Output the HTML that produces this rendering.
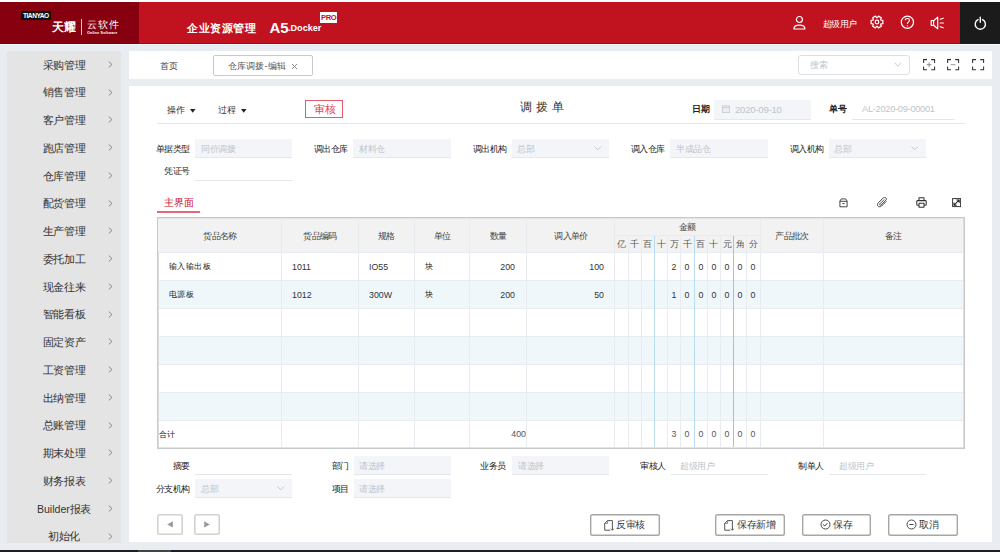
<!DOCTYPE html><html><head><meta charset="utf-8"><style>
html,body{margin:0;padding:0;}
body{width:1000px;height:552px;overflow:hidden;position:relative;background:#e9ecf1;font-family:"Liberation Sans", sans-serif;}
.b{position:absolute;box-sizing:border-box;}
.t{position:absolute;white-space:nowrap;line-height:1;}
.c{position:absolute;white-space:nowrap;line-height:1;width:300px;text-align:center;}
.r{position:absolute;white-space:nowrap;line-height:1;width:300px;text-align:right;}
</style></head><body>
<div class="b" style="left:0px;top:0px;width:1000px;height:2px;background:#fcffff"></div>
<div class="b" style="left:0px;top:2px;width:1000px;height:41.7px;background:#c1121f"></div>
<div class="b" style="left:0px;top:42.6px;width:1000px;height:1.1px;background:#b8000f"></div>
<div class="b" style="left:0px;top:2px;width:139px;height:41.7px;background:#87000f"></div>
<div class="b" style="left:0px;top:42.6px;width:139px;height:1.1px;background:#7e000a"></div>
<div class="b" style="left:960.4px;top:2px;width:39.6px;height:41.7px;background:#1b1b1b"></div>
<div class="b" style="left:0px;top:43.7px;width:1000px;height:1.5px;background:#f4fafc"></div>
<div class="b" style="left:21px;top:11px;width:30.3px;height:9px;background:#111"></div>
<div class="t" style="left:22.50px;top:12.20px;font-size:7px;color:#fff;font-weight:bold;transform:scale(0.9429);transform-origin:0 0;letter-spacing:-0.530px;">TIANYAO</div>
<div class="t" style="left:52.20px;top:20.50px;font-size:12px;color:#fff;font-weight:bold;">天耀</div>
<div class="b" style="left:81px;top:19.3px;width:1px;height:15.4px;background:#e8c8cc"></div>
<div class="t" style="left:86.50px;top:20.00px;font-size:11px;color:#fff;font-weight:normal;transform:scale(0.9182);transform-origin:0 0;letter-spacing:0.708px;">云软件</div>
<div class="t" style="left:86.50px;top:31.00px;font-size:4px;color:#fff;font-weight:bold;transform:scale(0.9250);transform-origin:0 0;letter-spacing:0.162px;">Online Software</div>
<div class="t" style="left:187.30px;top:22.90px;font-size:11px;color:#fff;font-weight:bold;transform:scale(0.9636);transform-origin:0 0;letter-spacing:0.986px;">企业资源管理</div>
<div class="t" style="left:269.50px;top:19.60px;font-size:15px;color:#fff;font-weight:bold;">A5</div>
<div class="t" style="left:288.20px;top:24.30px;font-size:10px;color:#fff;font-weight:bold;transform:scale(0.9100);transform-origin:0 0;">.Docker</div>
<div class="b" style="left:320px;top:12.4px;width:16.8px;height:10.2px;background:#fff"></div>
<div class="t" style="left:321.20px;top:13.90px;font-size:8px;color:#c1121f;font-weight:bold;transform:scale(0.9500);transform-origin:0 0;letter-spacing:-0.421px;">PRO</div>
<svg class="b" style="left:792px;top:15px;" width="15" height="16" viewBox="0 0 15 16"><circle cx="7.4" cy="4.5" r="3.0" fill="none" stroke="#fff" stroke-width="1.2"/><path d="M1.9 14.0 C1.9 8.9 12.9 8.9 12.9 14.0 Z" fill="none" stroke="#fff" stroke-width="1.2" stroke-linejoin="round"/></svg>
<div class="t" style="left:823.40px;top:20.00px;font-size:9px;color:#fff;font-weight:normal;transform:scale(0.9444);transform-origin:0 0;">超级用户</div>
<svg class="b" style="left:870px;top:15.2px;" width="14" height="14" viewBox="0 0 14 14"><path d="M12.88 5.37 L12.88 8.63 L10.96 8.91 L10.64 9.47 L11.35 11.28 L8.53 12.90 L7.32 11.39 L6.68 11.39 L5.47 12.90 L2.65 11.28 L3.36 9.47 L3.04 8.91 L1.12 8.63 L1.12 5.37 L3.04 5.09 L3.36 4.53 L2.65 2.72 L5.47 1.10 L6.68 2.61 L7.32 2.61 L8.53 1.10 L11.35 2.72 L10.64 4.53 L10.96 5.09 Z" fill="none" stroke="#fff" stroke-width="1.25" stroke-linejoin="round"/><circle cx="7" cy="7" r="1.8" fill="none" stroke="#fff" stroke-width="1.2"/></svg>
<svg class="b" style="left:899.5px;top:15px;" width="15" height="14" viewBox="0 0 15 14"><circle cx="7.4" cy="7.2" r="6.1" fill="none" stroke="#fff" stroke-width="1.2"/><path d="M5.3 5.2 C5.3 3.0 9.5 3.0 9.5 5.2 C9.5 6.9 7.4 7.0 7.4 9.0" fill="none" stroke="#fff" stroke-width="1.1"/><circle cx="7.4" cy="10.9" r="0.65" fill="#fff"/></svg>
<svg class="b" style="left:929.5px;top:15.5px;" width="15" height="14" viewBox="0 0 15 14"><path d="M1.2 4.7 H3.6 L7.7 1.2 V12.8 L3.6 9.3 H1.2 Z M3.6 4.7 V9.3" fill="none" stroke="#fff" stroke-width="1.2" stroke-linejoin="round"/><path d="M10.3 3.3 L13.2 2.2 M10.3 7 H13.4 M10.3 10.7 L13.2 11.8" stroke="#fff" stroke-width="1.2" stroke-linecap="round"/></svg>
<svg class="b" style="left:973px;top:15.5px;" width="15" height="15" viewBox="0 0 15 15"><path d="M5.0 3.6 A5.1 5.1 0 1 0 9.6 3.6" fill="none" stroke="#fff" stroke-width="1.4" stroke-linecap="round"/><path d="M7.3 1.3 V6.3" stroke="#fff" stroke-width="1.4" stroke-linecap="round"/></svg>
<div class="b" style="left:7px;top:51px;width:114.2px;height:492px;background:#e4e4e4"></div>
<div class="b" style="left:7px;top:51px;width:114.2px;height:492px;overflow:hidden">
<div class="c" style="left:-93.00px;top:8.53px;font-size:11px;color:#333;font-weight:500;transform:scale(0.9636);transform-origin:50% 0;">采购管理</div>
<svg class="b" style="left:100.5px;top:9.80px" width="5" height="7" viewBox="0 0 5 7"><path d="M0.8 0.6 L4 3.5 L0.8 6.4" fill="none" stroke="#888" stroke-width="1.0"/></svg>
<div class="c" style="left:-93.00px;top:36.29px;font-size:11px;color:#333;font-weight:500;transform:scale(0.9636);transform-origin:50% 0;">销售管理</div>
<svg class="b" style="left:100.5px;top:37.56px" width="5" height="7" viewBox="0 0 5 7"><path d="M0.8 0.6 L4 3.5 L0.8 6.4" fill="none" stroke="#888" stroke-width="1.0"/></svg>
<div class="c" style="left:-93.00px;top:64.05px;font-size:11px;color:#333;font-weight:500;transform:scale(0.9636);transform-origin:50% 0;">客户管理</div>
<svg class="b" style="left:100.5px;top:65.32px" width="5" height="7" viewBox="0 0 5 7"><path d="M0.8 0.6 L4 3.5 L0.8 6.4" fill="none" stroke="#888" stroke-width="1.0"/></svg>
<div class="c" style="left:-93.00px;top:91.81px;font-size:11px;color:#333;font-weight:500;transform:scale(0.9636);transform-origin:50% 0;">跑店管理</div>
<svg class="b" style="left:100.5px;top:93.08px" width="5" height="7" viewBox="0 0 5 7"><path d="M0.8 0.6 L4 3.5 L0.8 6.4" fill="none" stroke="#888" stroke-width="1.0"/></svg>
<div class="c" style="left:-93.00px;top:119.57px;font-size:11px;color:#333;font-weight:500;transform:scale(0.9636);transform-origin:50% 0;">仓库管理</div>
<svg class="b" style="left:100.5px;top:120.84px" width="5" height="7" viewBox="0 0 5 7"><path d="M0.8 0.6 L4 3.5 L0.8 6.4" fill="none" stroke="#888" stroke-width="1.0"/></svg>
<div class="c" style="left:-93.00px;top:147.33px;font-size:11px;color:#333;font-weight:500;transform:scale(0.9636);transform-origin:50% 0;">配货管理</div>
<svg class="b" style="left:100.5px;top:148.60px" width="5" height="7" viewBox="0 0 5 7"><path d="M0.8 0.6 L4 3.5 L0.8 6.4" fill="none" stroke="#888" stroke-width="1.0"/></svg>
<div class="c" style="left:-93.00px;top:175.09px;font-size:11px;color:#333;font-weight:500;transform:scale(0.9636);transform-origin:50% 0;">生产管理</div>
<svg class="b" style="left:100.5px;top:176.36px" width="5" height="7" viewBox="0 0 5 7"><path d="M0.8 0.6 L4 3.5 L0.8 6.4" fill="none" stroke="#888" stroke-width="1.0"/></svg>
<div class="c" style="left:-93.00px;top:202.85px;font-size:11px;color:#333;font-weight:500;transform:scale(0.9636);transform-origin:50% 0;">委托加工</div>
<svg class="b" style="left:100.5px;top:204.12px" width="5" height="7" viewBox="0 0 5 7"><path d="M0.8 0.6 L4 3.5 L0.8 6.4" fill="none" stroke="#888" stroke-width="1.0"/></svg>
<div class="c" style="left:-93.00px;top:230.61px;font-size:11px;color:#333;font-weight:500;transform:scale(0.9636);transform-origin:50% 0;">现金往来</div>
<svg class="b" style="left:100.5px;top:231.88px" width="5" height="7" viewBox="0 0 5 7"><path d="M0.8 0.6 L4 3.5 L0.8 6.4" fill="none" stroke="#888" stroke-width="1.0"/></svg>
<div class="c" style="left:-93.00px;top:258.37px;font-size:11px;color:#333;font-weight:500;transform:scale(0.9636);transform-origin:50% 0;">智能看板</div>
<svg class="b" style="left:100.5px;top:259.64px" width="5" height="7" viewBox="0 0 5 7"><path d="M0.8 0.6 L4 3.5 L0.8 6.4" fill="none" stroke="#888" stroke-width="1.0"/></svg>
<div class="c" style="left:-93.00px;top:286.13px;font-size:11px;color:#333;font-weight:500;transform:scale(0.9636);transform-origin:50% 0;">固定资产</div>
<svg class="b" style="left:100.5px;top:287.40px" width="5" height="7" viewBox="0 0 5 7"><path d="M0.8 0.6 L4 3.5 L0.8 6.4" fill="none" stroke="#888" stroke-width="1.0"/></svg>
<div class="c" style="left:-93.00px;top:313.89px;font-size:11px;color:#333;font-weight:500;transform:scale(0.9636);transform-origin:50% 0;">工资管理</div>
<svg class="b" style="left:100.5px;top:315.16px" width="5" height="7" viewBox="0 0 5 7"><path d="M0.8 0.6 L4 3.5 L0.8 6.4" fill="none" stroke="#888" stroke-width="1.0"/></svg>
<div class="c" style="left:-93.00px;top:341.65px;font-size:11px;color:#333;font-weight:500;transform:scale(0.9636);transform-origin:50% 0;">出纳管理</div>
<svg class="b" style="left:100.5px;top:342.92px" width="5" height="7" viewBox="0 0 5 7"><path d="M0.8 0.6 L4 3.5 L0.8 6.4" fill="none" stroke="#888" stroke-width="1.0"/></svg>
<div class="c" style="left:-93.00px;top:369.41px;font-size:11px;color:#333;font-weight:500;transform:scale(0.9636);transform-origin:50% 0;">总账管理</div>
<svg class="b" style="left:100.5px;top:370.68px" width="5" height="7" viewBox="0 0 5 7"><path d="M0.8 0.6 L4 3.5 L0.8 6.4" fill="none" stroke="#888" stroke-width="1.0"/></svg>
<div class="c" style="left:-93.00px;top:397.17px;font-size:11px;color:#333;font-weight:500;transform:scale(0.9636);transform-origin:50% 0;">期末处理</div>
<svg class="b" style="left:100.5px;top:398.44px" width="5" height="7" viewBox="0 0 5 7"><path d="M0.8 0.6 L4 3.5 L0.8 6.4" fill="none" stroke="#888" stroke-width="1.0"/></svg>
<div class="c" style="left:-93.00px;top:424.93px;font-size:11px;color:#333;font-weight:500;transform:scale(0.9636);transform-origin:50% 0;">财务报表</div>
<svg class="b" style="left:100.5px;top:426.20px" width="5" height="7" viewBox="0 0 5 7"><path d="M0.8 0.6 L4 3.5 L0.8 6.4" fill="none" stroke="#888" stroke-width="1.0"/></svg>
<div class="c" style="left:-93.00px;top:452.69px;font-size:11px;color:#333;font-weight:500;transform:scale(0.9636);transform-origin:50% 0;">Builder报表</div>
<svg class="b" style="left:100.5px;top:453.96px" width="5" height="7" viewBox="0 0 5 7"><path d="M0.8 0.6 L4 3.5 L0.8 6.4" fill="none" stroke="#888" stroke-width="1.0"/></svg>
<div class="c" style="left:-93.00px;top:480.45px;font-size:11px;color:#333;font-weight:500;transform:scale(0.9636);transform-origin:50% 0;">初始化</div>
<svg class="b" style="left:100.5px;top:481.72px" width="5" height="7" viewBox="0 0 5 7"><path d="M0.8 0.6 L4 3.5 L0.8 6.4" fill="none" stroke="#888" stroke-width="1.0"/></svg>
</div>
<div class="b" style="left:129px;top:51px;width:863px;height:28px;background:#fff"></div>
<div class="t" style="left:160.20px;top:62.00px;font-size:9px;color:#444;font-weight:500;">首页</div>
<div class="b" style="left:213px;top:55px;width:100px;height:20.5px;border:1px solid #c9c9c9;border-radius:2px;background:#fff"></div>
<div class="t" style="left:227.50px;top:61.60px;font-size:10px;color:#555;font-weight:normal;transform:scale(0.9150);transform-origin:0 0;">仓库调拨-编辑</div>
<svg class="b" style="left:291px;top:62.6px;" width="7" height="7" viewBox="0 0 7 7"><path d="M1 1 L6 6 M6 1 L1 6" stroke="#777" stroke-width="0.9"/></svg>
<div class="b" style="left:798.4px;top:55.3px;width:111.3px;height:19.7px;border:1px solid #dcdfe6;border-radius:3px;background:#fff"></div>
<div class="t" style="left:809.80px;top:61.00px;font-size:9px;color:#c0c4cc;font-weight:normal;transform:scale(0.9667);transform-origin:0 0;">搜索</div>
<svg class="b" style="left:893.5px;top:62px;" width="8" height="6" viewBox="0 0 8 6"><path d="M0.6 0.8 L3.8 4.2 L7 0.8" fill="none" stroke="#c0c4cc" stroke-width="0.9"/></svg>
<svg class="b" style="left:922.7px;top:58.5px;" width="13" height="12" viewBox="0 0 13 12"><path d="M0.6 4.0 V0.6 H4.0 M8.2 0.6 H11.6 V4.0 M11.6 7.4 V10.8 H8.2 M4.0 10.8 H0.6 V7.4" fill="none" stroke="#333" stroke-width="1.05"/><path d="M6.1 3.4 V8.0 M3.8 5.7 H8.4" stroke="#777" stroke-width="0.85"/></svg>
<svg class="b" style="left:947.4px;top:58.5px;" width="13" height="12" viewBox="0 0 13 12"><path d="M0.6 4.0 V0.6 H4.0 M8.2 0.6 H11.6 V4.0 M11.6 7.4 V10.8 H8.2 M4.0 10.8 H0.6 V7.4" fill="none" stroke="#333" stroke-width="1.05"/><path d="M3.6 5.7 H8.6" stroke="#888" stroke-width="0.85"/></svg>
<svg class="b" style="left:971.7px;top:58.5px;" width="13" height="12" viewBox="0 0 13 12"><path d="M0.6 4.0 V0.6 H4.0 M8.2 0.6 H11.6 V4.0 M11.6 7.4 V10.8 H8.2 M4.0 10.8 H0.6 V7.4" fill="none" stroke="#333" stroke-width="1.05"/></svg>
<div class="b" style="left:129px;top:86px;width:863px;height:456px;background:#fff"></div>
<div class="t" style="left:167.10px;top:106.20px;font-size:9px;color:#333;font-weight:normal;transform:scale(0.9667);transform-origin:0 0;">操作</div>
<svg class="b" style="left:190px;top:109px;" width="6" height="4" viewBox="0 0 6 4"><path d="M0 0 H5.5 L2.75 3.7 Z" fill="#222"/></svg>
<div class="t" style="left:218.10px;top:106.20px;font-size:9px;color:#333;font-weight:normal;transform:scale(0.9667);transform-origin:0 0;">过程</div>
<svg class="b" style="left:241px;top:109px;" width="6" height="4" viewBox="0 0 6 4"><path d="M0 0 H5.5 L2.75 3.7 Z" fill="#222"/></svg>
<div class="b" style="left:305.4px;top:99.9px;width:37.4px;height:18.4px;border:1px solid #e55a66;background:#fff"></div>
<div class="t" style="left:313.60px;top:103.90px;font-size:12px;color:#e0424f;font-weight:normal;transform:scale(0.9417);transform-origin:0 0;">审核</div>
<div class="t" style="left:519.80px;top:100.60px;font-size:13px;color:#333;font-weight:normal;transform:scale(0.9385);transform-origin:0 0;letter-spacing:4.156px;">调拨单</div>
<div class="b" style="left:157px;top:122.5px;width:807.5px;height:1.0px;background:#e6e6e6"></div>
<div class="t" style="left:692.00px;top:104.60px;font-size:9px;color:#222;font-weight:bold;transform:scale(0.9889);transform-origin:0 0;">日期</div>
<div class="b" style="left:714px;top:100px;width:97px;height:19.5px;background:#f3f5f8;border-bottom:1px solid #e4e7ed"></div>
<svg class="b" style="left:721.8px;top:104.8px;" width="8" height="8" viewBox="0 0 8 8"><rect x="0.5" y="0.9" width="7" height="6.6" fill="#eceef2" stroke="#c8ccd3" stroke-width="0.9"/><path d="M0.5 2.6 H7.5" stroke="#c8ccd3" stroke-width="0.9"/></svg>
<div class="t" style="left:734.80px;top:105.00px;font-size:10px;color:#c0c4cc;font-weight:normal;transform:scale(0.9600);transform-origin:0 0;letter-spacing:-0.260px;">2020-09-10</div>
<div class="t" style="left:828.90px;top:104.60px;font-size:9px;color:#222;font-weight:bold;transform:scale(0.9889);transform-origin:0 0;">单号</div>
<div class="b" style="left:851.6px;top:118.5px;width:103.8px;height:1.0px;background:#e4e7ed"></div>
<div class="t" style="left:861.60px;top:105.10px;font-size:10px;color:#c0c4cc;font-weight:normal;transform:scale(0.9200);transform-origin:0 0;letter-spacing:-0.272px;">AL-2020-09-00001</div>
<div class="r" style="left:-110.20px;top:145.16px;font-size:9px;color:#222;font-weight:500;transform:scale(0.9556);transform-origin:100% 0;">单据类型</div>
<div class="b" style="left:195px;top:139px;width:97.4px;height:19px;background:#f3f5f8;border-bottom:1px solid #e4e7ed;"></div>
<div class="t" style="left:200.50px;top:144.96px;font-size:9px;color:#c0c4cc;font-weight:normal;transform:scale(0.9556);transform-origin:0 0;">同价调拨</div>
<div class="r" style="left:48.40px;top:145.16px;font-size:9px;color:#222;font-weight:500;transform:scale(0.9556);transform-origin:100% 0;">调出仓库</div>
<div class="b" style="left:353.4px;top:139px;width:97.4px;height:19px;background:#f3f5f8;border-bottom:1px solid #e4e7ed;"></div>
<div class="t" style="left:358.90px;top:144.96px;font-size:9px;color:#c0c4cc;font-weight:normal;transform:scale(0.9556);transform-origin:0 0;">材料仓</div>
<div class="r" style="left:206.80px;top:145.16px;font-size:9px;color:#222;font-weight:500;transform:scale(0.9556);transform-origin:100% 0;">调出机构</div>
<div class="b" style="left:511.8px;top:139px;width:97.4px;height:19px;background:#f3f5f8;border-bottom:1px solid #e4e7ed;"></div>
<div class="t" style="left:517.30px;top:144.96px;font-size:9px;color:#c0c4cc;font-weight:normal;transform:scale(0.9556);transform-origin:0 0;">总部</div>
<svg class="b" style="left:594.2px;top:146.0px;" width="8" height="5" viewBox="0 0 8 5"><path d="M0.6 0.6 L3.8 3.8 L7 0.6" fill="none" stroke="#c0c4cc" stroke-width="0.9"/></svg>
<div class="r" style="left:365.20px;top:145.16px;font-size:9px;color:#222;font-weight:500;transform:scale(0.9556);transform-origin:100% 0;">调入仓库</div>
<div class="b" style="left:670.2px;top:139px;width:97.4px;height:19px;background:#f3f5f8;border-bottom:1px solid #e4e7ed;"></div>
<div class="t" style="left:675.70px;top:144.96px;font-size:9px;color:#c0c4cc;font-weight:normal;transform:scale(0.9556);transform-origin:0 0;">半成品仓</div>
<div class="r" style="left:523.60px;top:145.16px;font-size:9px;color:#222;font-weight:500;transform:scale(0.9556);transform-origin:100% 0;">调入机构</div>
<div class="b" style="left:828.6px;top:139px;width:97.4px;height:19px;background:#f3f5f8;border-bottom:1px solid #e4e7ed;"></div>
<div class="t" style="left:834.10px;top:144.96px;font-size:9px;color:#c0c4cc;font-weight:normal;transform:scale(0.9556);transform-origin:0 0;">总部</div>
<svg class="b" style="left:911.0px;top:146.0px;" width="8" height="5" viewBox="0 0 8 5"><path d="M0.6 0.6 L3.8 3.8 L7 0.6" fill="none" stroke="#c0c4cc" stroke-width="0.9"/></svg>
<div class="r" style="left:-110.20px;top:167.16px;font-size:9px;color:#222;font-weight:500;transform:scale(0.9556);transform-origin:100% 0;">凭证号</div>
<div class="b" style="left:195px;top:161px;width:97.4px;height:20px;background:#fff;border-bottom:1px solid #e4e7ed;"></div>
<div class="t" style="left:164.00px;top:198.20px;font-size:10px;color:#c8102e;font-weight:normal;">主界面</div>
<div class="b" style="left:157px;top:211.2px;width:43px;height:1.8px;background:#dc6a7a"></div>
<svg class="b" style="left:838.5px;top:197.5px;" width="10" height="10" viewBox="0 0 10 10"><path d="M0.9 3 L2.3 0.9 H6.7 L8.1 3 V8.8 H0.9 Z M0.9 3.3 H8.1 M3.3 5.6 H5.7" fill="none" stroke="#333" stroke-width="0.9" stroke-linejoin="round"/></svg>
<svg class="b" style="left:876.5px;top:197px;" width="11" height="11" viewBox="0 0 11 11"><path d="M9.3 4.3 L4.6 9.0 C3.6 10.0 1.9 10.0 1.1 9.2 C0.3 8.4 0.3 6.8 1.3 5.8 L6.3 0.8 C7.0 0.1 8.1 0.1 8.8 0.8 C9.5 1.5 9.5 2.6 8.8 3.3 L4.2 7.9 C3.8 8.3 3.2 8.3 2.9 8.0 C2.6 7.7 2.6 7.1 3.0 6.7 L7.2 2.5" fill="none" stroke="#333" stroke-width="0.9"/></svg>
<svg class="b" style="left:915.5px;top:197.3px;" width="11" height="11" viewBox="0 0 11 11"><path d="M3 3.6 V0.8 H8 V3.6 M2.8 8.2 H1.6 C1 8.2 0.8 7.8 0.8 7.4 V4.4 C0.8 3.9 1.1 3.6 1.6 3.6 H9.4 C9.9 3.6 10.2 3.9 10.2 4.4 V7.4 C10.2 7.8 9.9 8.2 9.4 8.2 H8.2 M3 6.3 H8 V10.2 H3 Z" fill="none" stroke="#333" stroke-width="1.05" stroke-linejoin="round"/></svg>
<svg class="b" style="left:951.8px;top:198.3px;" width="9.5" height="10" viewBox="0 0 9.5 10"><rect x="0.6" y="0.6" width="8" height="8" fill="none" stroke="#333" stroke-width="0.95"/><path d="M2.0 7.2 L7.2 2.0 M4.4 2.0 H7.2 V4.8 M2.0 4.4 V7.2 H4.8" fill="none" stroke="#222" stroke-width="1.05"/></svg>
<div class="b" style="left:156.9px;top:216.8px;width:807.7px;height:232.2px;box-shadow:inset 0 0 0 1.6px #c9c9c9;background:#fff"></div>
<div class="b" style="left:158.4px;top:218.8px;width:804.7px;height:33.7px;background:#f2f2f2"></div>
<div class="b" style="left:158.6px;top:280.43px;width:804.4px;height:27.93px;background:#eff7fb"></div>
<div class="b" style="left:158.6px;top:336.29px;width:804.4px;height:27.93px;background:#eff7fb"></div>
<div class="b" style="left:158.6px;top:392.15px;width:804.4px;height:27.93px;background:#eff7fb"></div>
<div class="b" style="left:158.6px;top:252.0px;width:804.4px;height:1.0px;background:#e6ecf2"></div>
<div class="b" style="left:158.6px;top:279.93px;width:804.4px;height:1.0px;background:#e6ecf2"></div>
<div class="b" style="left:158.6px;top:307.86px;width:804.4px;height:1.0px;background:#e6ecf2"></div>
<div class="b" style="left:158.6px;top:335.79px;width:804.4px;height:1.0px;background:#e6ecf2"></div>
<div class="b" style="left:158.6px;top:363.72px;width:804.4px;height:1.0px;background:#e6ecf2"></div>
<div class="b" style="left:158.6px;top:391.65px;width:804.4px;height:1.0px;background:#e6ecf2"></div>
<div class="b" style="left:158.6px;top:419.58px;width:804.4px;height:1.0px;background:#e6ecf2"></div>
<div class="b" style="left:280.5px;top:218.9px;width:1.0px;height:228.3px;background:#e8ebf0"></div>
<div class="b" style="left:357.5px;top:218.9px;width:1.0px;height:228.3px;background:#e8ebf0"></div>
<div class="b" style="left:413.5px;top:218.9px;width:1.0px;height:228.3px;background:#e8ebf0"></div>
<div class="b" style="left:469.1px;top:218.9px;width:1.0px;height:228.3px;background:#e8ebf0"></div>
<div class="b" style="left:526.0px;top:218.9px;width:1.0px;height:228.3px;background:#e8ebf0"></div>
<div class="b" style="left:614.3px;top:218.9px;width:1.0px;height:228.3px;background:#e8ebf0"></div>
<div class="b" style="left:759.5px;top:218.9px;width:1.0px;height:228.3px;background:#e8ebf0"></div>
<div class="b" style="left:823.1px;top:218.9px;width:1.0px;height:228.3px;background:#e8ebf0"></div>
<div class="b" style="left:614.8px;top:235.2px;width:145.2px;height:1.0px;background:#e8ebf0"></div>
<div class="b" style="left:627.5px;top:235.7px;width:1.0px;height:211.5px;background:#e8ebf0"></div>
<div class="b" style="left:640.7px;top:235.7px;width:1.0px;height:211.5px;background:#e8ebf0"></div>
<div class="b" style="left:653.9px;top:235.7px;width:1.0px;height:211.5px;background:#b9dcf2"></div>
<div class="b" style="left:667.1px;top:235.7px;width:1.0px;height:211.5px;background:#e8ebf0"></div>
<div class="b" style="left:680.3px;top:235.7px;width:1.0px;height:211.5px;background:#e8ebf0"></div>
<div class="b" style="left:693.5px;top:235.7px;width:1.0px;height:211.5px;background:#b9dcf2"></div>
<div class="b" style="left:706.7px;top:235.7px;width:1.0px;height:211.5px;background:#e8ebf0"></div>
<div class="b" style="left:719.9px;top:235.7px;width:1.0px;height:211.5px;background:#e8ebf0"></div>
<div class="b" style="left:733.1px;top:235.7px;width:1.0px;height:211.5px;background:#f0a3aa"></div>
<div class="b" style="left:746.3px;top:235.7px;width:1.0px;height:211.5px;background:#e8ebf0"></div>
<div class="c" style="left:70.00px;top:231.81px;font-size:9px;color:#444;font-weight:500;transform:scale(0.9444);transform-origin:50% 0;">货品名称</div>
<div class="c" style="left:169.50px;top:231.81px;font-size:9px;color:#444;font-weight:500;transform:scale(0.9444);transform-origin:50% 0;">货品编码</div>
<div class="c" style="left:236.00px;top:231.81px;font-size:9px;color:#444;font-weight:500;transform:scale(0.9444);transform-origin:50% 0;">规格</div>
<div class="c" style="left:292.00px;top:231.81px;font-size:9px;color:#444;font-weight:500;transform:scale(0.9444);transform-origin:50% 0;">单位</div>
<div class="c" style="left:348.00px;top:231.81px;font-size:9px;color:#444;font-weight:500;transform:scale(0.9444);transform-origin:50% 0;">数量</div>
<div class="c" style="left:420.50px;top:231.81px;font-size:9px;color:#444;font-weight:500;transform:scale(0.9444);transform-origin:50% 0;">调入单价</div>
<div class="c" style="left:641.80px;top:231.81px;font-size:9px;color:#444;font-weight:500;transform:scale(0.9444);transform-origin:50% 0;">产品批次</div>
<div class="c" style="left:743.00px;top:231.81px;font-size:9px;color:#444;font-weight:500;transform:scale(0.9444);transform-origin:50% 0;">备注</div>
<div class="c" style="left:537.40px;top:223.01px;font-size:9px;color:#444;font-weight:500;transform:scale(0.9444);transform-origin:50% 0;">金额</div>
<div class="c" style="left:471.40px;top:239.74px;font-size:9px;color:#555;font-weight:normal;">亿</div>
<div class="c" style="left:484.60px;top:239.74px;font-size:9px;color:#555;font-weight:normal;">千</div>
<div class="c" style="left:497.80px;top:239.74px;font-size:9px;color:#555;font-weight:normal;">百</div>
<div class="c" style="left:511.00px;top:239.74px;font-size:9px;color:#555;font-weight:normal;">十</div>
<div class="c" style="left:524.20px;top:239.74px;font-size:9px;color:#555;font-weight:normal;">万</div>
<div class="c" style="left:537.40px;top:239.74px;font-size:9px;color:#555;font-weight:normal;">千</div>
<div class="c" style="left:550.60px;top:239.74px;font-size:9px;color:#555;font-weight:normal;">百</div>
<div class="c" style="left:563.80px;top:239.74px;font-size:9px;color:#555;font-weight:normal;">十</div>
<div class="c" style="left:577.00px;top:239.74px;font-size:9px;color:#555;font-weight:normal;">元</div>
<div class="c" style="left:590.20px;top:239.74px;font-size:9px;color:#555;font-weight:normal;">角</div>
<div class="c" style="left:603.40px;top:239.74px;font-size:9px;color:#555;font-weight:normal;">分</div>
<div class="t" style="left:169.40px;top:262.20px;font-size:9px;color:#222;font-weight:500;transform:scale(0.9389);transform-origin:0 0;">输入输出板</div>
<div class="t" style="left:292.20px;top:262.71px;font-size:9px;color:#333;font-weight:normal;transform:scale(0.9778);transform-origin:0 0;">1011</div>
<div class="t" style="left:368.60px;top:262.71px;font-size:9px;color:#333;font-weight:normal;transform:scale(0.9778);transform-origin:0 0;">IO55</div>
<div class="t" style="left:424.60px;top:262.20px;font-size:9px;color:#222;font-weight:500;transform:scale(0.9389);transform-origin:0 0;">块</div>
<div class="r" style="left:215.30px;top:262.71px;font-size:9px;color:#333;font-weight:normal;transform:scale(0.9778);transform-origin:100% 0;">200</div>
<div class="r" style="left:304.00px;top:262.71px;font-size:9px;color:#333;font-weight:normal;transform:scale(0.9778);transform-origin:100% 0;">100</div>
<div class="c" style="left:524.20px;top:262.71px;font-size:9px;color:#333;font-weight:normal;transform:scale(0.9778);transform-origin:50% 0;">2</div>
<div class="c" style="left:537.40px;top:262.71px;font-size:9px;color:#333;font-weight:normal;transform:scale(0.9778);transform-origin:50% 0;">0</div>
<div class="c" style="left:550.60px;top:262.71px;font-size:9px;color:#333;font-weight:normal;transform:scale(0.9778);transform-origin:50% 0;">0</div>
<div class="c" style="left:563.80px;top:262.71px;font-size:9px;color:#333;font-weight:normal;transform:scale(0.9778);transform-origin:50% 0;">0</div>
<div class="c" style="left:577.00px;top:262.71px;font-size:9px;color:#333;font-weight:normal;transform:scale(0.9778);transform-origin:50% 0;">0</div>
<div class="c" style="left:590.20px;top:262.71px;font-size:9px;color:#333;font-weight:normal;transform:scale(0.9778);transform-origin:50% 0;">0</div>
<div class="c" style="left:603.40px;top:262.71px;font-size:9px;color:#333;font-weight:normal;transform:scale(0.9778);transform-origin:50% 0;">0</div>
<div class="t" style="left:169.40px;top:290.13px;font-size:9px;color:#222;font-weight:500;transform:scale(0.9389);transform-origin:0 0;">电源板</div>
<div class="t" style="left:292.20px;top:290.64px;font-size:9px;color:#333;font-weight:normal;transform:scale(0.9778);transform-origin:0 0;">1012</div>
<div class="t" style="left:368.60px;top:290.64px;font-size:9px;color:#333;font-weight:normal;transform:scale(0.9778);transform-origin:0 0;">300W</div>
<div class="t" style="left:424.60px;top:290.13px;font-size:9px;color:#222;font-weight:500;transform:scale(0.9389);transform-origin:0 0;">块</div>
<div class="r" style="left:215.30px;top:290.64px;font-size:9px;color:#333;font-weight:normal;transform:scale(0.9778);transform-origin:100% 0;">200</div>
<div class="r" style="left:304.00px;top:290.64px;font-size:9px;color:#333;font-weight:normal;transform:scale(0.9778);transform-origin:100% 0;">50</div>
<div class="c" style="left:524.20px;top:290.64px;font-size:9px;color:#333;font-weight:normal;transform:scale(0.9778);transform-origin:50% 0;">1</div>
<div class="c" style="left:537.40px;top:290.64px;font-size:9px;color:#333;font-weight:normal;transform:scale(0.9778);transform-origin:50% 0;">0</div>
<div class="c" style="left:550.60px;top:290.64px;font-size:9px;color:#333;font-weight:normal;transform:scale(0.9778);transform-origin:50% 0;">0</div>
<div class="c" style="left:563.80px;top:290.64px;font-size:9px;color:#333;font-weight:normal;transform:scale(0.9778);transform-origin:50% 0;">0</div>
<div class="c" style="left:577.00px;top:290.64px;font-size:9px;color:#333;font-weight:normal;transform:scale(0.9778);transform-origin:50% 0;">0</div>
<div class="c" style="left:590.20px;top:290.64px;font-size:9px;color:#333;font-weight:normal;transform:scale(0.9778);transform-origin:50% 0;">0</div>
<div class="c" style="left:603.40px;top:290.64px;font-size:9px;color:#333;font-weight:normal;transform:scale(0.9778);transform-origin:50% 0;">0</div>
<div class="t" style="left:159.30px;top:429.78px;font-size:9px;color:#222;font-weight:500;transform:scale(0.9389);transform-origin:0 0;">合计</div>
<div class="r" style="left:225.50px;top:430.29px;font-size:9px;color:#555;font-weight:normal;transform:scale(0.9778);transform-origin:100% 0;">400</div>
<div class="c" style="left:524.20px;top:430.29px;font-size:9px;color:#555;font-weight:normal;transform:scale(0.9778);transform-origin:50% 0;">3</div>
<div class="c" style="left:537.40px;top:430.29px;font-size:9px;color:#555;font-weight:normal;transform:scale(0.9778);transform-origin:50% 0;">0</div>
<div class="c" style="left:550.60px;top:430.29px;font-size:9px;color:#555;font-weight:normal;transform:scale(0.9778);transform-origin:50% 0;">0</div>
<div class="c" style="left:563.80px;top:430.29px;font-size:9px;color:#555;font-weight:normal;transform:scale(0.9778);transform-origin:50% 0;">0</div>
<div class="c" style="left:577.00px;top:430.29px;font-size:9px;color:#555;font-weight:normal;transform:scale(0.9778);transform-origin:50% 0;">0</div>
<div class="c" style="left:590.20px;top:430.29px;font-size:9px;color:#555;font-weight:normal;transform:scale(0.9778);transform-origin:50% 0;">0</div>
<div class="c" style="left:603.40px;top:430.29px;font-size:9px;color:#555;font-weight:normal;transform:scale(0.9778);transform-origin:50% 0;">0</div>
<div class="r" style="left:-109.80px;top:461.76px;font-size:9px;color:#222;font-weight:500;transform:scale(0.9556);transform-origin:100% 0;">摘要</div>
<div class="b" style="left:195.2px;top:456.4px;width:97.0px;height:18.6px;background:#fff;border-bottom:1px solid #e4e7ed;"></div>
<div class="r" style="left:-109.80px;top:484.56px;font-size:9px;color:#222;font-weight:500;transform:scale(0.9556);transform-origin:100% 0;">分支机构</div>
<div class="b" style="left:195.2px;top:478.8px;width:97.0px;height:19.2px;background:#f3f5f8;border-bottom:1px solid #e4e7ed;"></div>
<div class="t" style="left:200.70px;top:484.86px;font-size:9px;color:#c0c4cc;font-weight:normal;transform:scale(0.9556);transform-origin:0 0;">总部</div>
<svg class="b" style="left:277.2px;top:485.9px;" width="8" height="5" viewBox="0 0 8 5"><path d="M0.6 0.6 L3.8 3.8 L7 0.6" fill="none" stroke="#c0c4cc" stroke-width="0.9"/></svg>
<div class="r" style="left:48.60px;top:461.76px;font-size:9px;color:#222;font-weight:500;transform:scale(0.9556);transform-origin:100% 0;">部门</div>
<div class="b" style="left:353.6px;top:456.4px;width:97.0px;height:18.6px;background:#f3f5f8;border-bottom:1px solid #e4e7ed;"></div>
<div class="t" style="left:359.10px;top:462.16px;font-size:9px;color:#c0c4cc;font-weight:normal;transform:scale(0.9556);transform-origin:0 0;">请选择</div>
<div class="r" style="left:48.60px;top:484.56px;font-size:9px;color:#222;font-weight:500;transform:scale(0.9556);transform-origin:100% 0;">项目</div>
<div class="b" style="left:353.6px;top:478.8px;width:97.0px;height:19.2px;background:#f3f5f8;border-bottom:1px solid #e4e7ed;"></div>
<div class="t" style="left:359.10px;top:484.86px;font-size:9px;color:#c0c4cc;font-weight:normal;transform:scale(0.9556);transform-origin:0 0;">请选择</div>
<div class="r" style="left:206.30px;top:461.76px;font-size:9px;color:#222;font-weight:500;transform:scale(0.9556);transform-origin:100% 0;">业务员</div>
<div class="b" style="left:512px;top:456.4px;width:97.3px;height:18.6px;background:#f3f5f8;border-bottom:1px solid #e4e7ed;"></div>
<div class="t" style="left:517.50px;top:462.16px;font-size:9px;color:#c0c4cc;font-weight:normal;transform:scale(0.9556);transform-origin:0 0;">请选择</div>
<div class="r" style="left:365.60px;top:461.76px;font-size:9px;color:#222;font-weight:500;transform:scale(0.9556);transform-origin:100% 0;">审核人</div>
<div class="b" style="left:670.5px;top:456.4px;width:97.2px;height:18.6px;background:#fff;border-bottom:1px solid #e4e7ed;"></div>
<div class="t" style="left:680.30px;top:462.16px;font-size:9px;color:#c0c4cc;font-weight:normal;transform:scale(0.9556);transform-origin:0 0;">超级用户</div>
<div class="r" style="left:524.00px;top:461.76px;font-size:9px;color:#222;font-weight:500;transform:scale(0.9556);transform-origin:100% 0;">制单人</div>
<div class="b" style="left:829.3px;top:456.4px;width:97.2px;height:18.6px;background:#fff;border-bottom:1px solid #e4e7ed;"></div>
<div class="t" style="left:839.10px;top:462.16px;font-size:9px;color:#c0c4cc;font-weight:normal;transform:scale(0.9556);transform-origin:0 0;">超级用户</div>
<div class="b" style="left:157px;top:514.2px;width:26.2px;height:21.3px;box-shadow:inset 0 0 0 1.6px #d2d2d2;border-radius:2.5px;background:#fff"></div>
<svg class="b" style="left:167.3px;top:521.3px;" width="6" height="7" viewBox="0 0 6 7"><path d="M5.8 0.2 V6.6 L0.2 3.4 Z" fill="#999"/></svg>
<div class="b" style="left:193.8px;top:514.2px;width:26.0px;height:21.3px;box-shadow:inset 0 0 0 1.6px #d2d2d2;border-radius:2.5px;background:#fff"></div>
<svg class="b" style="left:203.7px;top:521.3px;" width="6" height="7" viewBox="0 0 6 7"><path d="M0.2 0.2 V6.6 L5.8 3.4 Z" fill="#999"/></svg>
<div class="b" style="left:590.3px;top:514.2px;width:69.3px;height:21.8px;box-shadow:inset 0 0 0 1.4px #a6a6a6;border-radius:2.5px;background:#fff"></div>
<svg class="b" style="left:603.5px;top:519.5px" width="11" height="11" viewBox="0 0 11 11"><path d="M6.2 10.2 H0.7 V3.4 L3.6 0.6 H8.4 V10.0" fill="none" stroke="#555" stroke-width="1"/><path d="M3.6 0.6 V3.4 H0.7" fill="none" stroke="#555" stroke-width="0.7"/><path d="M7.0 8.7 L8.4 10.3 L9.8 8.7" fill="none" stroke="#555" stroke-width="0.9"/></svg>
<div class="t" style="left:616.10px;top:520.22px;font-size:10px;color:#3a3a3a;font-weight:normal;transform:scale(0.9600);transform-origin:0 0;">反审核</div>
<div class="b" style="left:715.3px;top:514.2px;width:69.3px;height:21.8px;box-shadow:inset 0 0 0 1.4px #a6a6a6;border-radius:2.5px;background:#fff"></div>
<svg class="b" style="left:723.8px;top:519.5px" width="11" height="11" viewBox="0 0 11 11"><path d="M6.2 10.2 H0.7 V3.4 L3.6 0.6 H8.4 V10.0" fill="none" stroke="#555" stroke-width="1"/><path d="M3.6 0.6 V3.4 H0.7" fill="none" stroke="#555" stroke-width="0.7"/><path d="M7.0 8.7 L8.4 10.3 L9.8 8.7" fill="none" stroke="#555" stroke-width="0.9"/></svg>
<div class="t" style="left:736.70px;top:520.22px;font-size:10px;color:#3a3a3a;font-weight:normal;transform:scale(0.9600);transform-origin:0 0;">保存新增</div>
<div class="b" style="left:801.5px;top:514.2px;width:69.1px;height:21.8px;box-shadow:inset 0 0 0 1.4px #a6a6a6;border-radius:2.5px;background:#fff"></div>
<svg class="b" style="left:819.5px;top:519.1px" width="11" height="11" viewBox="0 0 11 11"><circle cx="5.5" cy="5.5" r="4.5" fill="none" stroke="#4a4a4a" stroke-width="1"/><path d="M3.0 5.4 L4.9 7.0 L7.5 4.0" fill="none" stroke="#4a4a4a" stroke-width="1"/></svg>
<div class="t" style="left:832.80px;top:520.22px;font-size:10px;color:#3a3a3a;font-weight:normal;transform:scale(0.9600);transform-origin:0 0;">保存</div>
<div class="b" style="left:888px;top:514.2px;width:69.6px;height:21.8px;box-shadow:inset 0 0 0 1.4px #a6a6a6;border-radius:2.5px;background:#fff"></div>
<svg class="b" style="left:906.3px;top:519.1px" width="11" height="11" viewBox="0 0 11 11"><circle cx="5.5" cy="5.5" r="4.5" fill="none" stroke="#4a4a4a" stroke-width="1"/><path d="M3.4 5.5 H7.6" fill="none" stroke="#4a4a4a" stroke-width="1"/></svg>
<div class="t" style="left:919.40px;top:520.22px;font-size:10px;color:#3a3a3a;font-weight:normal;transform:scale(0.9600);transform-origin:0 0;">取消</div>
<div class="b" style="left:0px;top:549.6px;width:1000px;height:2.4px;background:#1c1e24"></div>
<div class="b" style="left:137.6px;top:549.5px;width:33.6px;height:2.5px;background:#444"></div>
</body></html>
